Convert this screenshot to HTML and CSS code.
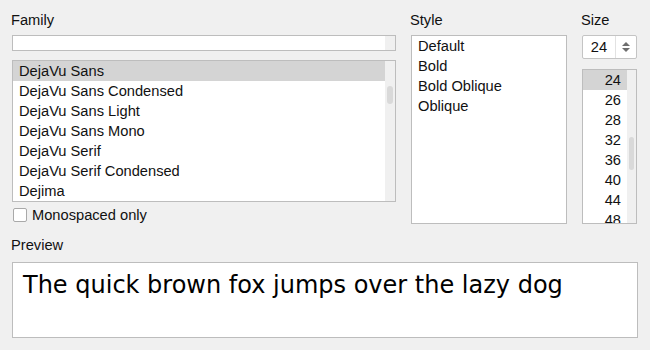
FILE: index.html
```html
<!DOCTYPE html>
<html>
<head>
<meta charset="utf-8">
<link rel="stylesheet" href="styles.css">
</head>
<body>
<div class="dialog">
  <div class="top">
    <div class="col col-family">
      <div class="label">Family</div>
      <div class="search"><div class="search-field"></div><div class="search-gutter"></div></div>
      <div class="list list-family">
        <div class="items">
          <div class="item selected">DejaVu Sans</div>
          <div class="item">DejaVu Sans Condensed</div>
          <div class="item">DejaVu Sans Light</div>
          <div class="item">DejaVu Sans Mono</div>
          <div class="item">DejaVu Serif</div>
          <div class="item">DejaVu Serif Condensed</div>
          <div class="item">Dejima</div>
        </div>
        <div class="scrollbar scrollbar-family"><div class="thumb"></div></div>
      </div>
      <label class="check-row"><span class="checkbox"></span><span>Monospaced only</span></label>
    </div>
    <div class="col col-style">
      <div class="label">Style</div>
      <div class="list list-style">
        <div class="items">
          <div class="item">Default</div>
          <div class="item">Bold</div>
          <div class="item">Bold Oblique</div>
          <div class="item">Oblique</div>
        </div>
      </div>
    </div>
    <div class="col col-size">
      <div class="label">Size</div>
      <div class="spin">
        <div class="spin-value">24</div>
        <div class="spin-arrows">
          <svg width="10" height="12" viewBox="0 0 10 12"><path d="M5 1 L9 5 L1 5 Z" fill="#6e6e6e"/><path d="M1 7 L9 7 L5 11 Z" fill="#6e6e6e"/></svg>
        </div>
      </div>
      <div class="list list-size">
        <div class="items size-items">
          <div class="item selected">24</div>
          <div class="item">26</div>
          <div class="item">28</div>
          <div class="item">32</div>
          <div class="item">36</div>
          <div class="item">40</div>
          <div class="item">44</div>
          <div class="item">48</div>
        </div>
        <div class="scrollbar scrollbar-size"><div class="thumb"></div></div>
      </div>
    </div>
  </div>
  <div class="label preview-label">Preview</div>
  <div class="preview">The quick brown fox jumps over the lazy dog</div>
</div>
</body>
</html>
```

FILE: styles.css
```css
html, body {
  margin: 0;
  padding: 0;
  background: #f0f0f0;
}
body {
  width: 650px;
  height: 350px;
  overflow: hidden;
  font-family: "Liberation Sans", Arial, sans-serif;
  font-size: 14.67px;
  color: #111;
}
.dialog {
  padding: 10px 13px 0 12px;
}
.top {
  display: grid;
  grid-template-columns: 384px 156px 55px;
  column-gap: 15px;
  align-items: start;
}
.col {
  display: flex;
  flex-direction: column;
}
.label {
  height: 20px;
  line-height: 20px;
  margin-left: -1px;
  margin-bottom: 5px;
  white-space: nowrap;
}
.search {
  height: 16px;
  box-sizing: border-box;
  border: 1px solid #bdbdbd;
  display: flex;
  background: #fff;
}
.search-field {
  flex: 1;
}
.search-gutter {
  width: 10px;
  background: #f0f0f0;
}
.list {
  box-sizing: border-box;
  border: 1px solid #bdbdbd;
  background: #fff;
  display: flex;
  overflow: hidden;
}
.list-family {
  margin-top: 9px;
  height: 142px;
}
.items {
  flex: 1;
  min-width: 0;
}
.item {
  height: 20px;
  line-height: 20px;
  padding-left: 6px;
  white-space: nowrap;
}
.item.selected {
  background: #d4d4d4;
}
.scrollbar {
  width: 10px;
  background: #f0f0f0;
  position: relative;
}
.thumb {
  position: absolute;
  background: #d9d9d9;
  border-radius: 3px;
}
.scrollbar-family .thumb {
  left: 2px;
  width: 6px;
  top: 25px;
  height: 18px;
}
.check-row {
  display: flex;
  align-items: center;
  height: 20px;
  margin-top: 3px;
  gap: 5px;
}
.checkbox {
  width: 14px;
  height: 14px;
  box-sizing: border-box;
  border: 1px solid #a9a9a9;
  border-radius: 2px;
  background: #fff;
  margin-left: 1px;
}
.list-style {
  height: 189px;
}
.spin {
  height: 24px;
  box-sizing: border-box;
  border: 1px solid #c4c4c4;
  border-radius: 2px;
  background: #fff;
  display: flex;
}
.spin-value {
  width: 32px;
  line-height: 22px;
  text-align: center;
  border-right: 1px solid #e2e2e2;
}
.spin-arrows {
  flex: 1;
  display: flex;
  align-items: center;
  justify-content: center;
}
.spin-arrows svg {
  display: block;
}
.list-size {
  margin-top: 10px;
  height: 155px;
}
.size-items .item {
  padding-left: 0;
  padding-right: 6px;
  text-align: right;
}
.scrollbar-size {
  width: 9px;
}
.scrollbar-size .thumb {
  left: 2px;
  width: 5px;
  top: 67px;
  height: 33px;
}
.preview-label {
  margin-top: 10px;
  margin-bottom: 7px;
}
.preview {
  width: 626px;
  height: 76px;
  box-sizing: border-box;
  border: 1px solid #bdbdbd;
  background: #fff;
  padding: 8px 0 0 10px;
  font-family: "DejaVu Sans", sans-serif;
  font-size: 24px;
  line-height: 28px;
  color: #000;
  white-space: nowrap;
}
```
